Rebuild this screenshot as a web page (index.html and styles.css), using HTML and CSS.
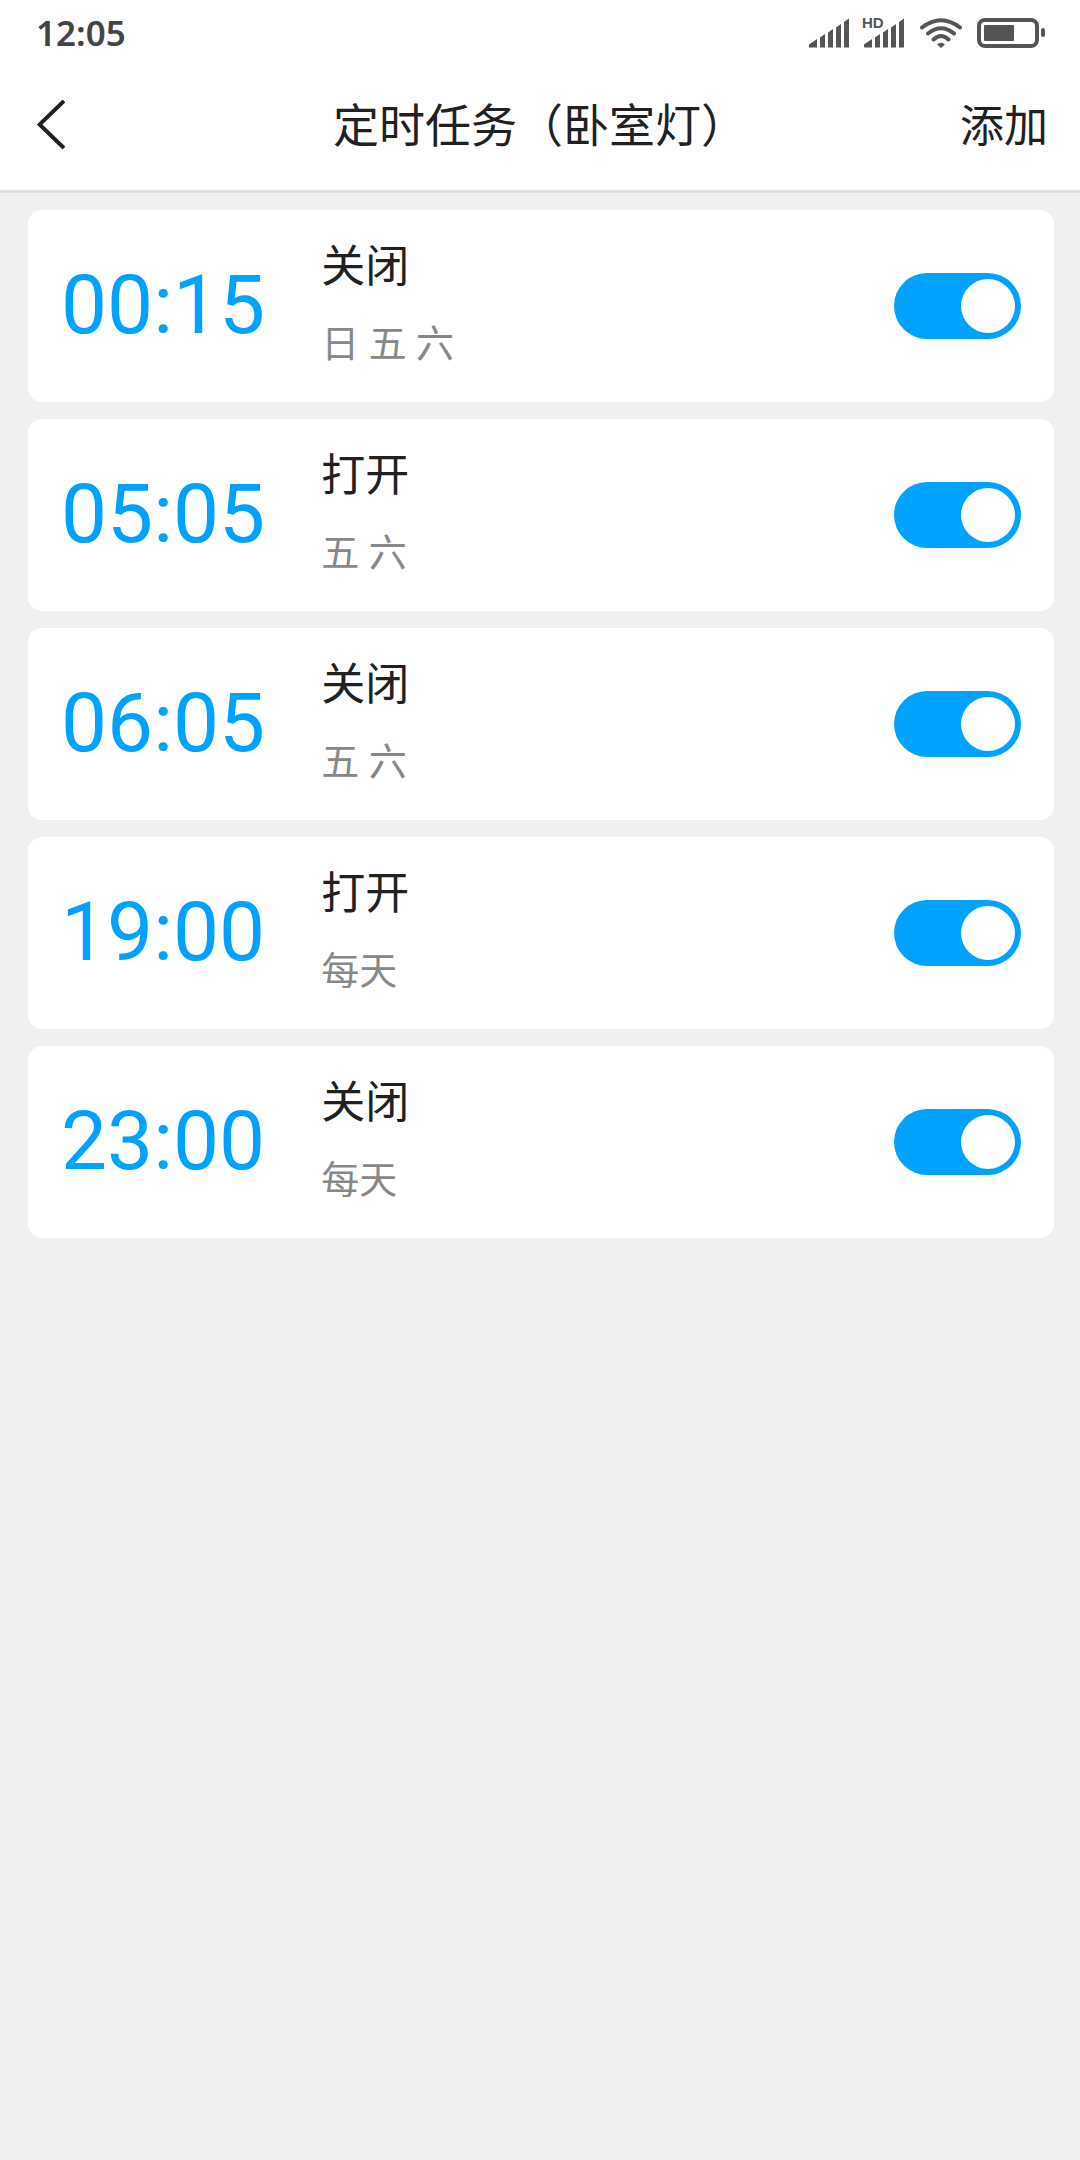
FILE: index.html
```html
<!DOCTYPE html>
<html lang="zh-CN">
<head>
  <meta charset="UTF-8" />
  <meta name="viewport" content="width=device-width, initial-scale=1" />
  <title>定时任务</title>
  <link rel="stylesheet" href="styles.css">
</head>
<body>
  <div class="status-bar">
    <span class="clock">12:05</span>
    <div class="status-icons">
      <svg class="signal" width="41" height="30" viewBox="0 0 41 30">
        <path d="M0 29v-2.500l8-5.500v8.500h-7.500zM11 29.500v-10l5-3.500v13.500zM19 29.500v-15l5-3.500v18.500zM27 29.500v-20l5-3.500v23.500zM35 29.500v-25.500l5-3.500v29z" />
      </svg>
      <svg class="signal" width="43" height="38" viewBox="0 -6 43 38">
        <text x="0" y="12" class="hd">HD</text>
        <path d="M2 31v-2.500l8-5.500v8.500h-7.500zM13 31.500v-10l5-3.500v13.500zM21 31.500v-15l5-3.500v18.500zM29 31.500v-20l5-3.500v23.500zM37 31.500v-25.500l5-3.500v29z" />
      </svg>
      <svg class="wifi" width="42" height="30" viewBox="0 0 42 30">
        <path d="M2 9.500Q21-5 40 9.500M8 15.500Q21 5 34 15.500M13.500 21.500Q21 14.500 28.500 21.500" />
        <path class="dot" d="M17 26.500Q21 23 25 26.500L21 30z" />
      </svg>
      <svg class="battery" width="68" height="30" viewBox="0 0 68 30">
        <rect class="shell" x="2" y="2" width="58" height="26" rx="6" />
        <rect x="7" y="7" width="30" height="16" rx="1" />
        <rect x="64" y="10" width="4" height="9" rx="2" />
      </svg>
    </div>
  </div>

  <header class="nav">
    <button class="back" aria-label="返回">
      <svg width="28" height="50" viewBox="0 0 28 50">
        <path d="M27 1L2.500 24.500L27 48" />
      </svg>
    </button>
    <h1 class="title">定时任务（卧室灯）</h1>
    <button class="add">添加</button>
  </header>

  <main class="tasks">
    <label class="task">
      <span class="time">00:15</span>
      <span class="info">
        <span class="action">关闭</span>
        <span class="days">日 五 六</span>
      </span>
      <input type="checkbox" class="switch" checked />
    </label>
    <label class="task">
      <span class="time">05:05</span>
      <span class="info">
        <span class="action">打开</span>
        <span class="days">五 六</span>
      </span>
      <input type="checkbox" class="switch" checked />
    </label>
    <label class="task">
      <span class="time">06:05</span>
      <span class="info">
        <span class="action">关闭</span>
        <span class="days">五 六</span>
      </span>
      <input type="checkbox" class="switch" checked />
    </label>
    <label class="task">
      <span class="time">19:00</span>
      <span class="info">
        <span class="action">打开</span>
        <span class="days">每天</span>
      </span>
      <input type="checkbox" class="switch" checked />
    </label>
    <label class="task">
      <span class="time">23:00</span>
      <span class="info">
        <span class="action">关闭</span>
        <span class="days">每天</span>
      </span>
      <input type="checkbox" class="switch" checked />
    </label>
  </main>
</body>
</html>
```

FILE: styles.css
```css
* {
  box-sizing: border-box;
}
body {
  margin: 0;
  background: #f0f0f0;
  color: #212121;
  font-family: Roboto, "Noto Sans CJK SC", sans-serif;
}
button {
  padding: 0;
  border: 0;
  background: none;
  color: inherit;
  font: inherit;
}

/* status bar */
.status-bar {
  display: flex;
  justify-content: space-between;
  align-items: center;
  height: 60px;
  padding: 6px 35px 0 36px;
  background: #fff;
}
.clock {
  color: #444;
  font: 600 35px/40px "Noto Sans", sans-serif;
}
.status-icons {
  display: flex;
  align-items: flex-end;
  gap: 15px;
  padding-bottom: 8px;
  fill: #555;
}
.signal + .signal {
  margin-left: -3px;
}
.hd {
  font: 700 15px "Liberation Sans", sans-serif;
}
.wifi path {
  fill: none;
  stroke: #555;
  stroke-width: 4;
  stroke-linecap: round;
}
.wifi .dot {
  fill: #555;
  stroke: none;
}
.battery .shell {
  fill: none;
  stroke: #555;
  stroke-width: 4;
}

/* title bar */
.nav {
  display: grid;
  grid-template-columns: 1fr auto 1fr;
  align-items: center;
  height: 133px;
  padding: 0 32px;
  border-bottom: 3px solid #e0e0e0;
  background: #fff;
}
.back {
  justify-self: start;
  height: 50px;
  padding-left: 5px;
}
.back svg {
  display: block;
  fill: none;
  stroke: #212121;
  stroke-width: 4;
}
.title {
  margin: 0;
  padding-top: 2px;
  font-size: 46px;
  font-weight: 400;
  line-height: 64px;
}
.add {
  justify-self: end;
  padding-top: 4px;
  font-size: 44px;
  line-height: 64px;
}

/* task list */
.tasks {
  display: flex;
  flex-direction: column;
  gap: 17px;
  padding: 17px 26px 17px 28px;
}
.task {
  display: flex;
  align-items: center;
  height: 192px;
  padding: 0 33px;
  border-radius: 14px;
  background: #fff;
}
.time {
  margin-right: 56px;
  padding-bottom: 2px;
  color: #00a2ff;
  font-size: 82px;
  line-height: 96px;
}
.info {
  display: flex;
  flex: 1;
  flex-direction: column;
  gap: 25px;
  padding-bottom: 2px;
}
.action {
  font-size: 44px;
  line-height: 52px;
}
.days {
  color: #888;
  font-size: 38px;
  line-height: 52px;
}
.switch {
  appearance: none;
  width: 127px;
  height: 66px;
  margin: 0;
  padding: 6px;
  border-radius: 33px;
  background: #ccc;
}
.switch::before {
  content: "";
  display: block;
  width: 54px;
  height: 54px;
  border-radius: 50%;
  background: #fff;
}
.switch:checked {
  background: #00a2ff;
}
.switch:checked::before {
  margin-left: auto;
}
```
